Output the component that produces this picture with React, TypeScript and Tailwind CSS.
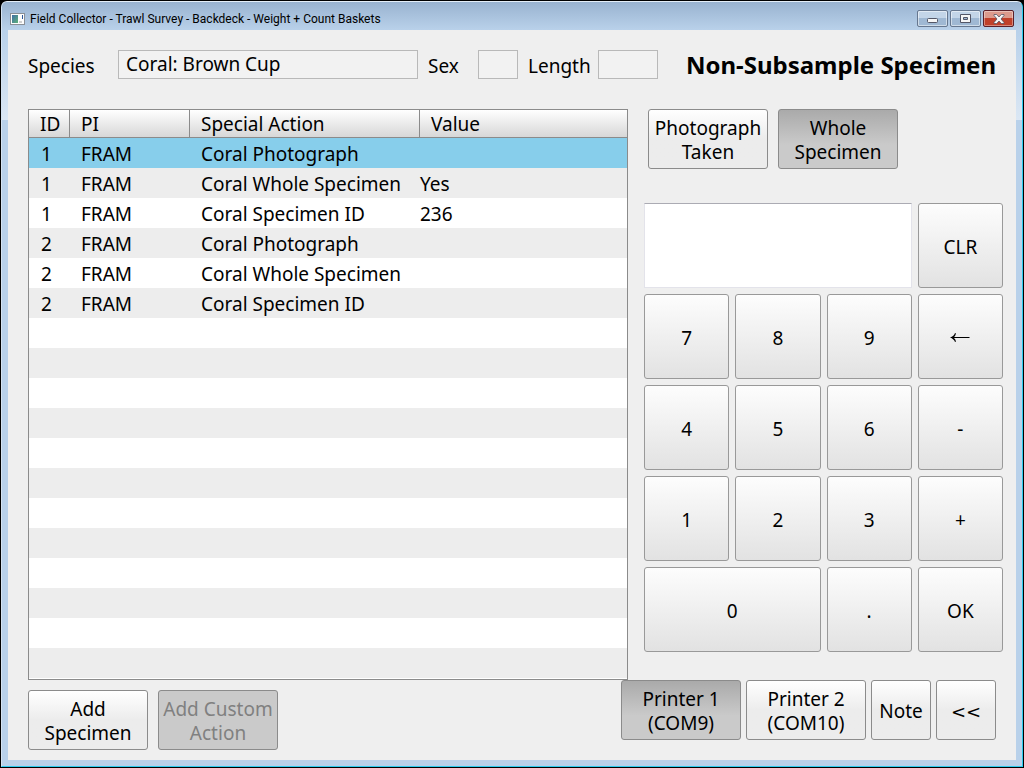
import { ReactNode } from "react";

type Row = { id: number; pi: string; action: string; value: string };

const rows: Row[] = [
  { id: 1, pi: "FRAM", action: "Coral Photograph", value: "" },
  { id: 1, pi: "FRAM", action: "Coral Whole Specimen", value: "Yes" },
  { id: 1, pi: "FRAM", action: "Coral Specimen ID", value: "236" },
  { id: 2, pi: "FRAM", action: "Coral Photograph", value: "" },
  { id: 2, pi: "FRAM", action: "Coral Whole Specimen", value: "" },
  { id: 2, pi: "FRAM", action: "Coral Specimen ID", value: "" },
];

const looks = {
  normal: "border-[#8b8b8b] bg-linear-to-b from-white to-[#ececec] to-50%",
  pressed: "border-[#8b8b8b] bg-linear-to-b from-[#aaaaaa] to-[#cacaca] to-60%",
  disabled: "border-[#8b8b8b] bg-[#cacaca] text-[#808080]",
};

function ActionButton({ look = "normal", width = "w-[120px]", children }: { look?: keyof typeof looks; width?: string; children: ReactNode }) {
  return (
    <button
      type="button"
      disabled={look === "disabled"}
      aria-pressed={look === "pressed"}
      className={`flex h-[60px] shrink-0 items-center justify-center rounded-[3px] border pt-[2px] text-center leading-6 ${width} ${looks[look]}`}
    >
      <span>{children}</span>
    </button>
  );
}

function Key({ wide = false, label, children }: { wide?: boolean; label?: string; children: ReactNode }) {
  return (
    <button
      type="button"
      aria-label={label}
      className={`flex h-[85px] items-center justify-center rounded-[3px] border border-[#999999] bg-linear-to-b from-[#fdfdfd] to-[#e2e2e2] pt-[2px] ${wide ? "col-span-2" : ""}`}
    >
      {children}
    </button>
  );
}

function TitleBar() {
  const caption = "flex h-[17px] w-[31px] items-center justify-center rounded-[2px] border";
  const glass = `${caption} border-[#66778f] bg-linear-to-b from-[#c3d5e8] from-45% to-[#9fb8d3] to-50% shadow-[inset_0_0_0_1px_#ffffff80]`;
  return (
    <header className="flex h-7 shrink-0 items-center justify-between bg-linear-to-b from-[#99b3d0] to-[#b9d1ea] px-2 pt-[5px]">
      <div className="flex items-center gap-[5px]">
        <svg width="15" height="12" viewBox="0 0 15 12" aria-hidden="true">
          <defs>
            <linearGradient id="pane" x1="0" y1="0" x2="1" y2="1">
              <stop offset="0" stopColor="#3f6fa5" />
              <stop offset="1" stopColor="#5fb07a" />
            </linearGradient>
          </defs>
          <rect x="0.5" y="0.5" width="14" height="11" fill="#fdfdfd" stroke="#8a8f96" />
          <rect x="2" y="2" width="6" height="8" fill="url(#pane)" />
          <rect x="12" y="2" width="1" height="4" fill="#2d5a9a" />
          <rect x="9" y="8" width="3" height="2" fill="#d0d0d0" />
        </svg>
        <h1 className="font-['Roboto','Open_Sans',sans-serif] text-[12px] leading-4">
          Field Collector - Trawl Survey - Backdeck - Weight + Count Baskets
        </h1>
      </div>
      <div className="flex gap-[2px]">
        <button type="button" aria-label="Minimize" className={glass}>
          <svg className="mt-1" width="11" height="5" viewBox="0 0 11 5"><rect x="0.5" y="0.5" width="10" height="4" rx="1" fill="#f6f6f6" stroke="#535666" /></svg>
        </button>
        <button type="button" aria-label="Maximize" className={glass}>
          <svg width="11" height="9" viewBox="0 0 11 9"><path d="M.5.5h10v8H.5zM3.500 3.500v2h4v-2z" fill="#f6f6f6" fillRule="evenodd" stroke="#535666" /></svg>
        </button>
        <button type="button" aria-label="Close" className={`${caption} border-[#5a1f28] bg-linear-to-b from-[#dc9a8c] from-45% to-[#c0402a] to-50% shadow-[inset_0_0_0_1px_#ffffff60]`}>
          <svg width="12" height="10" viewBox="0 0 12 10"><path d="M1 .5h2.700L6 3 8.300.5H11v1L8 5l3 3.500v1H8.300L6 7 3.700 9.500H1v-1L4 5 1 1.500z" fill="#f6f6f6" stroke="#535666" strokeWidth=".8" /></svg>
        </button>
      </div>
    </header>
  );
}

export default function App() {
  const field = "h-[29px] border border-[#b9b9b9] bg-[#f2f2f2] pb-[2px]";
  return (
    <div className="flex min-h-screen flex-col bg-black p-px font-['Noto_Sans','DejaVu_Sans',sans-serif] text-[19px] leading-6 text-black">
      <div className="flex flex-1 flex-col overflow-hidden rounded-t-[6px] border border-t-[#e4eef8] border-r-[#2ccbee] border-b-[#2ccbee] border-l-[#d5e3f2] bg-[linear-gradient(to_bottom,#b9d1ea_30px,#dbe7f4_118px,#b9d1ea_118px)]">
        <TitleBar />
        <main className="mx-[6px] mb-[6px] flex flex-1 flex-col bg-[#efefef] pt-5 pr-[13px] pb-[10px] pl-5">
          <div className="flex items-center">
            <label htmlFor="species" className="w-[90px] pt-[2px]">Species</label>
            <input id="species" readOnly defaultValue="Coral: Brown Cup" className={`${field} w-[300px] px-[7px]`} />
            <label htmlFor="sex" className="ml-[10px] w-[50px] pt-[2px]">Sex</label>
            <input id="sex" readOnly className={`${field} w-10 px-1`} />
            <label htmlFor="length" className="ml-[10px] w-[70px] pt-[2px]">Length</label>
            <input id="length" readOnly className={`${field} w-[60px] px-1`} />
            <h2 className="ml-auto pr-[7px] text-[24px] font-bold whitespace-nowrap">Non-Subsample Specimen</h2>
          </div>

          <div className="mt-[30px] flex flex-1 gap-4">
            <div className="flex w-[600px] grow flex-col border border-[#8b8b8b] bg-[repeating-linear-gradient(to_bottom,#ffffff_0px_30px,#ededed_30px_60px)] bg-position-[0px_28px]">
              <table className="w-full table-fixed border-separate border-spacing-0 text-left">
                <colgroup>
                  <col className="w-[41px]" />
                  <col className="w-[120px]" />
                  <col className="w-[230px]" />
                  <col />
                </colgroup>
                <thead>
                  <tr className="h-7 bg-linear-to-b from-white to-[#d6d6d6]">
                    {["ID", "PI", "Special Action", "Value"].map((h) => (
                      <th key={h} className="border-r border-b border-[#8b8b8b] p-0 pl-[11px] font-normal last:border-r-0">{h}</th>
                    ))}
                  </tr>
                </thead>
                <tbody>
                  {rows.map((r, i) => (
                    <tr key={i} className="h-[30px] first:bg-[#87ceeb]">
                      <td className="p-0 pt-[2px] pl-3">{r.id}</td>
                      <td className="p-0 pt-[2px] pl-[11px]">{r.pi}</td>
                      <td className="p-0 pt-[2px] pl-[11px] whitespace-nowrap">{r.action}</td>
                      <td className="p-0 pt-[2px]">{r.value}</td>
                    </tr>
                  ))}
                </tbody>
              </table>
            </div>

            <div className="flex w-[359px] shrink-0 flex-col">
              <div className="flex gap-[10px] pl-1">
                <ActionButton>Photograph<br />Taken</ActionButton>
                <ActionButton look="pressed">Whole<br />Specimen</ActionButton>
              </div>
              <div className="mt-[34px] grid grid-cols-4 gap-[6px]">
                <input aria-label="Keypad entry" className="col-span-3 h-[85px] border border-[#e3e3ea] border-t-[#ababb3] bg-white px-3" />
                <Key>CLR</Key>
                <Key>7</Key>
                <Key>8</Key>
                <Key>9</Key>
                <Key label="Backspace">
                  <svg width="20" height="9" viewBox="0 0 20 9" aria-hidden="true">
                    <path d="M1 4.500h18.500" stroke="#000" fill="none" />
                    <path d="M0 4.500Q4 3 5 0L6 .500Q5.500 3 3.500 4.500Q5.500 6 6 8.500L5 9Q4 6 0 4.500z" />
                  </svg>
                </Key>
                <Key>4</Key>
                <Key>5</Key>
                <Key>6</Key>
                <Key>-</Key>
                <Key>1</Key>
                <Key>2</Key>
                <Key>3</Key>
                <Key>+</Key>
                <Key wide>0</Key>
                <Key>.</Key>
                <Key>OK</Key>
              </div>
            </div>
          </div>

          <footer className="flex justify-between">
            <div className="flex gap-[10px] pt-[10px]">
              <ActionButton>Add<br />Specimen</ActionButton>
              <ActionButton look="disabled">Add Custom<br />Action</ActionButton>
            </div>
            <div className="flex gap-[5px] pr-[7px]">
              <ActionButton look="pressed">Printer 1<br />(COM9)</ActionButton>
              <ActionButton>Printer 2<br />(COM10)</ActionButton>
              <ActionButton width="w-[60px]">Note</ActionButton>
              <ActionButton width="w-[60px]"><span className="font-['DejaVu_Sans',sans-serif] text-[18px]">&lt;&lt;</span></ActionButton>
            </div>
          </footer>
        </main>
      </div>
    </div>
  );
}
